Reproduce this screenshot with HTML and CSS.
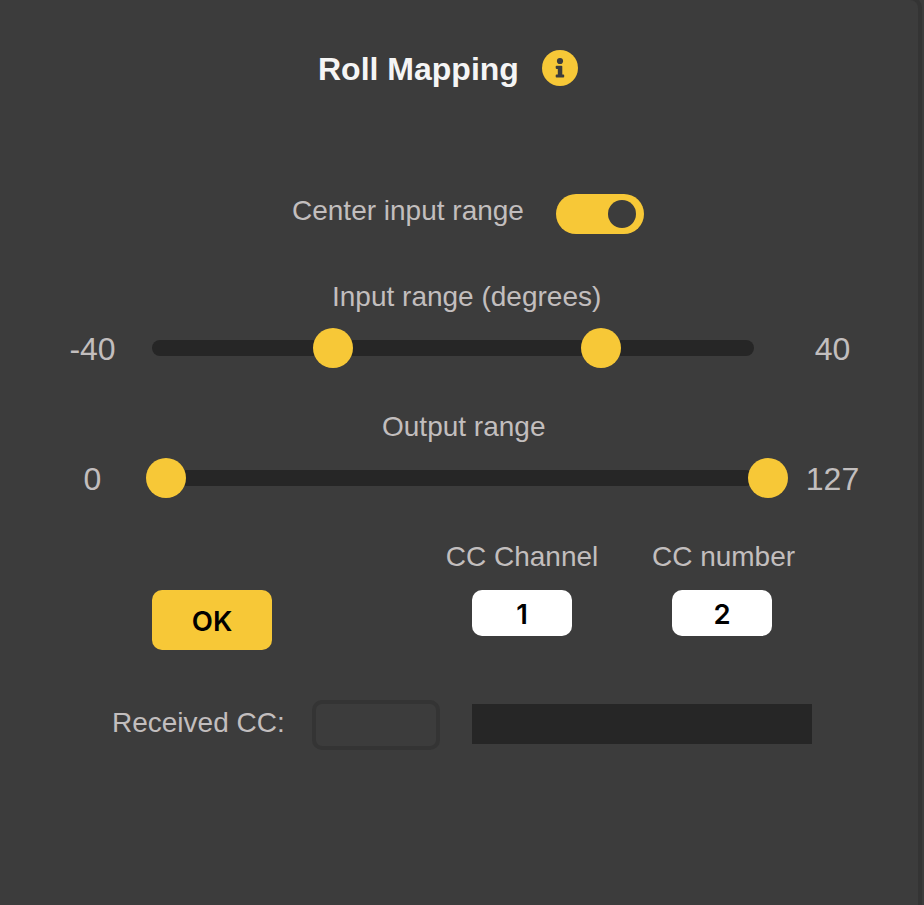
FILE: index.html
```html
<!DOCTYPE html>
<html lang="en">
<head>
<meta charset="utf-8">
<title>Roll Mapping</title>
<link rel="stylesheet" href="styles.css">
</head>
<body>
<main class="panel">
  <header class="heading">
    <h1>Roll Mapping</h1>
    <svg class="info" viewBox="0 0 36 36" aria-hidden="true">
      <circle class="disc" cx="18" cy="18" r="18"/>
      <circle class="glyph" cx="18" cy="11" r="3.1"/>
      <path class="glyph" d="M14.5 15.8h5a.8.8 0 0 1 .8.8v7.9h1.1a.8.8 0 0 1 .8.8v1.5a.8.8 0 0 1-.8.8h-6.9a.8.8 0 0 1-.8-.8v-1.5a.8.8 0 0 1 .8-.8h1.3v-5.6h-1.3a.8.8 0 0 1-.8-.8v-1.5a.8.8 0 0 1 .8-.8z"/>
    </svg>
  </header>

  <div class="center-row">
    <span class="label">Center input range</span>
    <span class="switch"><span class="knob"></span></span>
  </div>

  <section class="range input-range">
    <div class="caption">Input range (degrees)</div>
    <div class="slider-row">
      <span class="value">-40</span>
      <div class="track"><i class="thumb" style="left:30.1%"></i><i class="thumb" style="left:74.6%"></i></div>
      <span class="value">40</span>
    </div>
  </section>

  <section class="range output-range">
    <div class="caption">Output range</div>
    <div class="slider-row">
      <span class="value">0</span>
      <div class="track"><i class="thumb" style="left:2.33%"></i><i class="thumb" style="left:102.33%"></i></div>
      <span class="value">127</span>
    </div>
  </section>

  <div class="controls">
    <button class="ok" type="button">OK</button>
    <div class="field"><span>CC Channel</span><div class="number">1</div></div>
    <div class="field cc-number"><span>CC number</span><div class="number">2</div></div>
  </div>

  <div class="received">
    <span>Received CC:</span>
    <div class="readout"></div>
    <div class="meter"></div>
  </div>
</main>
</body>
</html>
```
FILE: styles.css
```css
* { box-sizing: border-box; }

html, body { height: 100%; }

body {
  margin: 0;
  overflow: hidden;
  background: #3c3c3c;
  color: #c2bebe;
  font: 28px/32px "Liberation Sans", Arial, sans-serif;
  white-space: nowrap;
}

.panel {
  width: 922px;
  height: 925px;
  margin-top: -4px;
  padding-top: 51px;
  border: solid #343434;
  border-width: 4px 4px 4px 0;
  border-top-right-radius: 12px;
}

.heading {
  display: flex;
  gap: 23px;
  height: 36px;
  padding-left: 318px;
}

h1 {
  margin: 0;
  font-size: 32px;
  line-height: 36px;
  color: #f5f5f5;
}

.info {
  width: 36px;
  height: 36px;
  margin-top: -1px;
}

.disc { fill: #f7c837; }
.glyph { fill: #3c3c3c; }

.center-row {
  display: flex;
  justify-content: space-between;
  width: 352px;
  height: 40px;
  margin: 107px 0 0 292px;
}

.label { padding-top: 1px; }

.switch {
  display: flex;
  align-items: center;
  justify-content: flex-end;
  width: 88px;
  height: 40px;
  padding-right: 8px;
  border-radius: 20px;
  background: #f7c837;
}

.knob {
  width: 28px;
  height: 28px;
  border-radius: 50%;
  background: #3c3c3c;
}

.range { height: 130px; }
.input-range { margin-top: 46px; }
.caption { height: 32px; line-height: 34px; }
.input-range .caption { padding-left: 332px; }
.output-range .caption { padding-left: 382px; }

.slider-row {
  display: grid;
  grid-template-columns: 121px 602px 126px;
  align-items: center;
  height: 36px;
  margin: 19px 0 0 32px;
}

.value {
  font-size: 32px;
  line-height: 36px;
  text-align: center;
}

.track + .value { padding-left: 29px; }

.track {
  position: relative;
  height: 16px;
  margin: -2px 1px 0 -1px;
  border-radius: 8px;
  background: #262626;
}

.thumb {
  position: absolute;
  top: -12px;
  width: 40px;
  height: 40px;
  margin-left: -20px;
  border-radius: 50%;
  background: #f7c837;
}

.controls {
  display: grid;
  grid-template-columns: 270px 200px 200px;
  height: 110px;
  margin-left: 152px;
}

.ok {
  width: 120px;
  height: 60px;
  margin-top: 50px;
  padding: 1px 0 0;
  border: 0;
  border-radius: 10px;
  background: #f7c837;
  color: #000;
  font: 600 27.5px/60px Inter, sans-serif;
}

.field {
  display: flex;
  flex-direction: column;
  align-items: center;
  gap: 18px;
}

.field span { height: 32px; line-height: 34px; }
.cc-number span { padding-left: 3px; }

.number {
  width: 100px;
  height: 46px;
  border-radius: 10px;
  background: #fff;
  color: #000;
  font: 600 27.5px/48px Inter, sans-serif;
  text-align: center;
}

.received {
  display: flex;
  align-items: center;
  height: 50px;
  margin: 50px 0 0 112px;
}

.received span { width: 200px; margin-top: -5px; }

.readout {
  width: 128px;
  height: 50px;
  border: 4px solid #343434;
  border-radius: 10px;
}

.meter {
  width: 340px;
  height: 40px;
  margin: -2px 0 0 32px;
  background: #262626;
}
```
